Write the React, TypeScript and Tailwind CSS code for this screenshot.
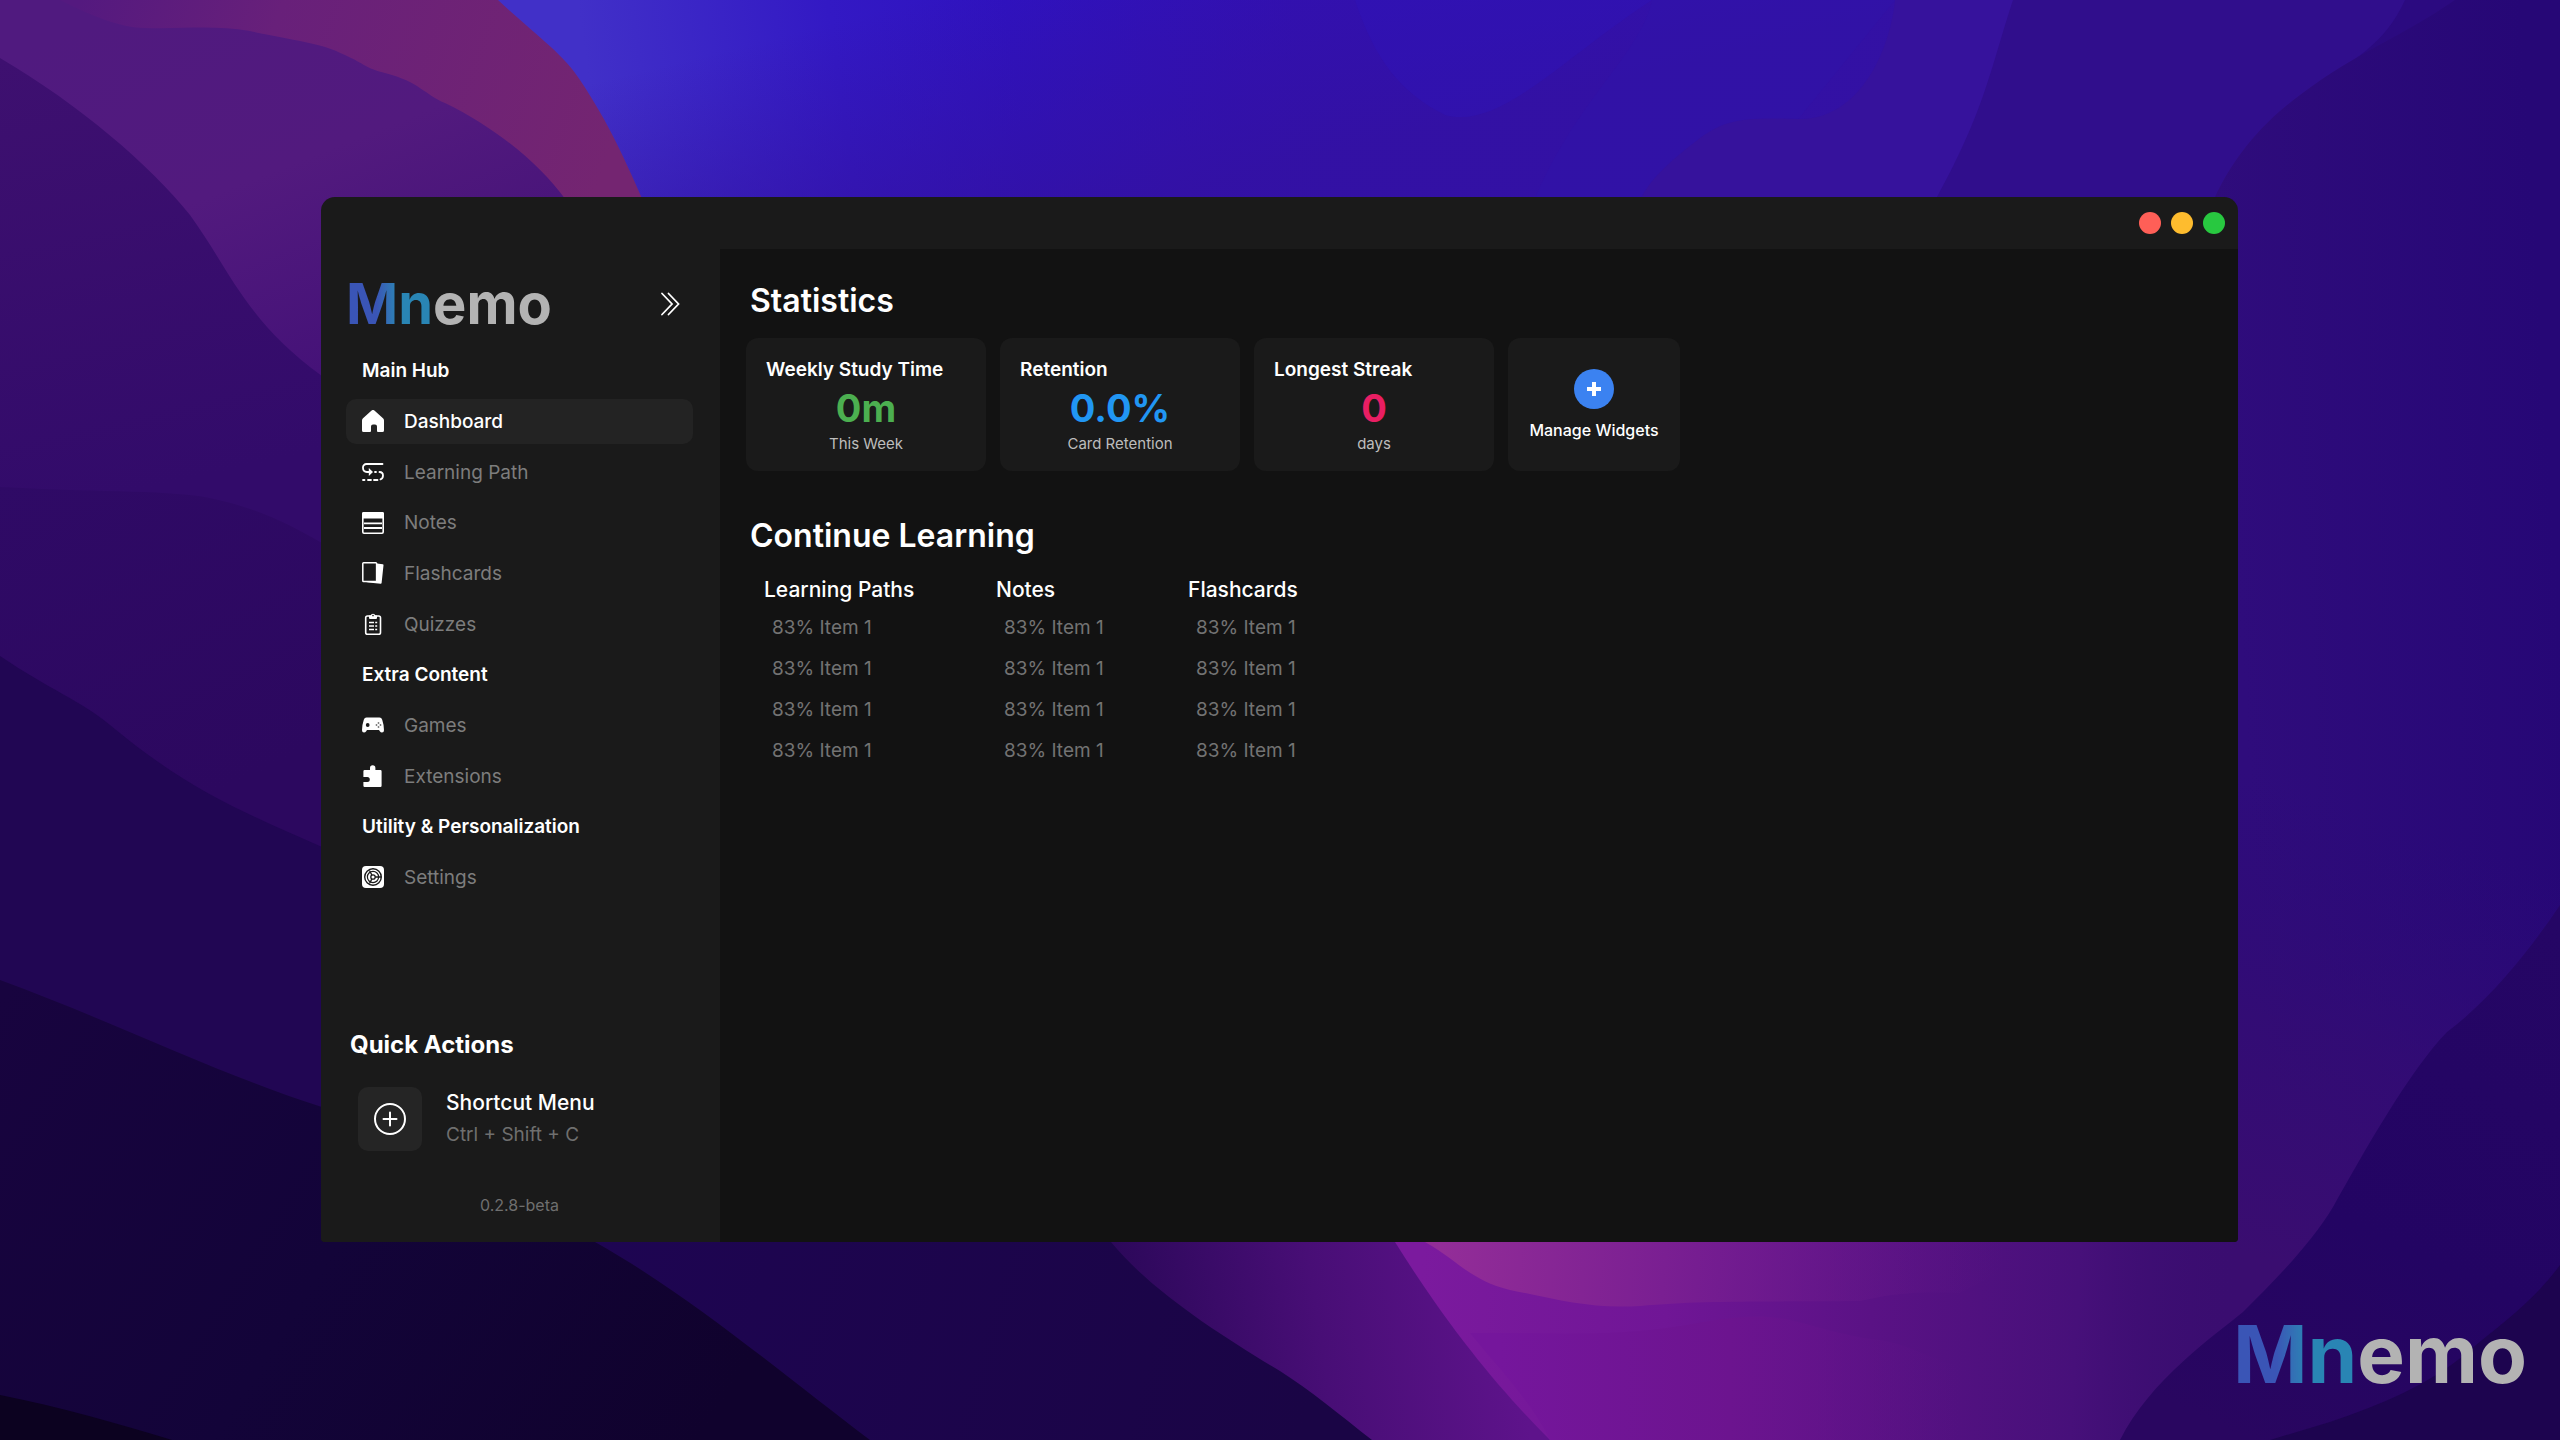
import React from "react";

function Wallpaper() {
  return (
    <svg
      className="absolute inset-0 h-full w-full"
      viewBox="0 0 2560 1440"
      preserveAspectRatio="none"
      aria-hidden="true"
    >
      <defs>
        <linearGradient id="sky" gradientUnits="userSpaceOnUse" x1="600" y1="160" x2="1300" y2="60">
          <stop offset="0" stopColor="#4130c8" />
          <stop offset="0.35" stopColor="#3319c4" />
          <stop offset="0.6" stopColor="#2f12bf" />
          <stop offset="1" stopColor="#3210b4" />
        </linearGradient>
        <linearGradient id="skyShade" gradientUnits="userSpaceOnUse" x1="760" y1="40" x2="820" y2="280">
          <stop offset="0" stopColor="#3311a0" stopOpacity="0" />
          <stop offset="1" stopColor="#3311a0" stopOpacity="0.8" />
        </linearGradient>
        <linearGradient id="rose" gradientUnits="userSpaceOnUse" x1="80" y1="0" x2="600" y2="180">
          <stop offset="0" stopColor="#54197f" />
          <stop offset="0.35" stopColor="#68207a" />
          <stop offset="1" stopColor="#742571" />
        </linearGradient>
        <linearGradient id="plum" gradientUnits="userSpaceOnUse" x1="150" y1="0" x2="300" y2="380">
          <stop offset="0" stopColor="#501a7f" />
          <stop offset="0.5" stopColor="#521a7e" />
          <stop offset="1" stopColor="#451278" />
        </linearGradient>
        <linearGradient id="violet" gradientUnits="userSpaceOnUse" x1="0" y1="60" x2="100" y2="500">
          <stop offset="0" stopColor="#3e1070" />
          <stop offset="1" stopColor="#320b6a" />
        </linearGradient>
        <linearGradient id="indigo" gradientUnits="userSpaceOnUse" x1="0" y1="480" x2="160" y2="820">
          <stop offset="0" stopColor="#2f0a66" />
          <stop offset="1" stopColor="#2c085f" />
        </linearGradient>
        <linearGradient id="night" gradientUnits="userSpaceOnUse" x1="0" y1="1000" x2="700" y2="1440">
          <stop offset="0" stopColor="#18043f" />
          <stop offset="0.5" stopColor="#130439" />
          <stop offset="1" stopColor="#10022d" />
        </linearGradient>
        <linearGradient id="deep" gradientUnits="userSpaceOnUse" x1="600" y1="1242" x2="1300" y2="1440">
          <stop offset="0" stopColor="#1e0552" />
          <stop offset="1" stopColor="#1a0545" />
        </linearGradient>
        <linearGradient id="orchidEdge" gradientUnits="userSpaceOnUse" x1="1120" y1="1300" x2="1500" y2="1240">
          <stop offset="0" stopColor="#2c085a" />
          <stop offset="0.5" stopColor="#480e76" />
          <stop offset="1" stopColor="#5e138b" />
        </linearGradient>
        <linearGradient id="orchid" gradientUnits="userSpaceOnUse" x1="1420" y1="1300" x2="2240" y2="1340">
          <stop offset="0" stopColor="#7b1a9e" />
          <stop offset="0.3" stopColor="#701696" />
          <stop offset="0.55" stopColor="#5a1285" />
          <stop offset="0.8" stopColor="#47107a" />
          <stop offset="1" stopColor="#390d70" stopOpacity="0" />
        </linearGradient>
        <linearGradient id="pink" gradientUnits="userSpaceOnUse" x1="1440" y1="1250" x2="2000" y2="1290">
          <stop offset="0" stopColor="#932d98" />
          <stop offset="0.4" stopColor="#7a1f92" />
          <stop offset="1" stopColor="#5a1484" stopOpacity="0" />
        </linearGradient>
        <linearGradient id="fold" gradientUnits="userSpaceOnUse" x1="1500" y1="1380" x2="1960" y2="1380">
          <stop offset="0" stopColor="#75169c" />
          <stop offset="0.5" stopColor="#6c148f" />
          <stop offset="1" stopColor="#5a1285" stopOpacity="0" />
        </linearGradient>
        <linearGradient id="east" gradientUnits="userSpaceOnUse" x1="2240" y1="640" x2="2560" y2="620">
          <stop offset="0" stopColor="#2f0c7c" />
          <stop offset="1" stopColor="#260776" />
        </linearGradient>
        <linearGradient id="eastGlow" gradientUnits="userSpaceOnUse" x1="2200" y1="1240" x2="2340" y2="800">
          <stop offset="0" stopColor="#3a0d70" />
          <stop offset="0.5" stopColor="#340c72" stopOpacity="0.7" />
          <stop offset="1" stopColor="#2b0a76" stopOpacity="0" />
        </linearGradient>
        <linearGradient id="eastLow" gradientUnits="userSpaceOnUse" x1="2500" y1="900" x2="2250" y2="1440">
          <stop offset="0" stopColor="#250665" />
          <stop offset="0.6" stopColor="#230463" />
          <stop offset="1" stopColor="#290660" />
        </linearGradient>
      </defs>
      <rect width="2560" height="1440" fill="url(#sky)" />
      <rect width="2560" height="260" fill="url(#skyShade)" />
      <path d="M1355 0C1375 60 1400 92 1445 115C1500 130 1560 60 1652 0Z" fill="#2f14bc" opacity="0.35" />
      <path d="M1652 0C1640 60 1560 110 1520 240H1700L1895 0Z" fill="#2f14aa" opacity="0.4" />
      <path d="M1895 0C1890 50 1860 119 1800 119C1740 117 1725 120 1700 138C1665 165 1650 180 1640 200V300H2100V0Z" fill="#36129c" />
      <path d="M2013 0C1990 70 1985 110 1937 197L1900 300H2560V0Z" fill="#300e8c" />
      <path d="M2405 0C2385 45 2350 62 2320 82L2560 200V0Z" fill="#2b0a80" />
      <path
        d="M2455 0C2400 38 2360 50 2300 95C2255 128 2230 165 2215 197L1700 700V1440H2560V0Z"
        fill="url(#east)"
      />
      <path d="M1700 700H2560V1440H1700Z" fill="url(#eastGlow)" />
      <path d="M498 0C530 30 565 55 580 80C610 125 625 160 645 205H0V0Z" fill="url(#rose)" />
      <path
        d="M0 0H60C90 15 120 28 145 28C185 29 215 25 250 31C290 40 320 42 345 55C365 64 365 68 385 73C420 82 425 95 445 103C500 130 540 165 566 200L400 420H0Z"
        fill="url(#plum)"
      />
      <path d="M0 58C80 105 150 165 190 215C230 270 245 320 322 376L500 500V1000H0Z" fill="url(#violet)" />
      <path d="M0 487C90 492 160 490 205 497C260 508 290 525 322 543L500 700V1000H0Z" fill="url(#indigo)" />
      <path d="M0 656C50 690 80 700 110 725C190 792 250 815 322 847L900 1000V1440H0Z" fill="#210653" />
      <path d="M322 1000H1400V1440H322Z" fill="url(#deep)" />
      <path d="M0 980C110 1020 220 1075 322 1107L595 1242C690 1295 790 1380 870 1440H0Z" fill="url(#night)" />
      <path d="M0 1395C60 1407 120 1424 172 1440H0Z" fill="#0c0220" />
      <path d="M1111 1242L1080 1200H1700V1440H1372C1340 1415 1310 1390 1280 1371C1220 1335 1150 1290 1111 1242Z" fill="url(#orchidEdge)" />
      <path
        d="M1395 1242L1380 1200H2560V1440H1550C1500 1390 1450 1330 1395 1242Z"
        fill="url(#orchid)"
      />
      <path
        d="M1425 1242C1460 1262 1470 1280 1510 1290C1560 1300 1590 1309 1640 1306C1700 1300 1760 1302 1860 1301C1900 1292 1920 1292 1960 1293L2060 1242Z"
        fill="url(#pink)"
      />
      <path
        d="M1500 1333C1560 1333 1620 1336 1680 1326C1730 1317 1760 1313 1790 1320C1830 1330 1850 1337 1880 1340C1910 1345 1920 1355 1960 1366V1440H1550C1530 1400 1500 1370 1470 1333Z"
        fill="url(#fold)"
      />
      <path
        d="M2560 905C2530 950 2490 1000 2447 1032C2410 1070 2365 1150 2333 1207C2310 1245 2275 1280 2243 1312C2215 1335 2150 1380 2120 1440H2560Z"
        fill="url(#eastLow)"
      />
      <path d="M2560 1265C2535 1300 2500 1325 2470 1350C2430 1385 2380 1405 2330 1422L2270 1440H2560Z" fill="#1d044f" />
    </svg>
  );
}

function Wordmark({ className }: { className: string }) {
  return (
    <span className={className}>
      <span className="bg-linear-to-r from-[#3a55b6] from-35% to-[#2985b4] to-60% bg-clip-text text-transparent">Mn</span>
      <span className="text-[#b3b3b3]">emo</span>
    </span>
  );
}

type IconProps = { children: React.ReactNode };

function Icon({ children }: IconProps) {
  return (
    <svg className="size-[22px] shrink-0" viewBox="0 0 22 22" fill="none" aria-hidden="true">
      {children}
    </svg>
  );
}

const HomeIcon = (
  <Icon>
    <path
      fill="#fff"
      d="M9.6.6a2 2 0 0 1 2.800 0l8.600 7.600q1 .9 1 2.200v10q0 1.600-1.600 1.600h-4.400q-1 0-1-1v-4.500a2 2 0 0 0-2-2h-2a2 2 0 0 0-2 2V21q0 1-1 1H1.600Q0 22 0 20.400v-10Q0 9.100 1 8.200z"
    />
  </Icon>
);

const PathIcon = (
  <Icon>
    <g stroke="#fff" strokeWidth="1.800" strokeLinecap="round">
      <path d="M20.500 3H4.500a3.500 3.500 0 0 0-3.500 3.800Q1 11 5 11h3" />
      <path d="M13 11h1M17.500 11q3.500.2 3.500 3.500 0 3-2.500 3.900" />
      <path d="M1 19h1.500M6 19h3M12 19h3.500" />
    </g>
    <path d="M6.800 7l4.200 4-4.200 4z" fill="#fff" />
  </Icon>
);

const NotesIcon = (
  <Icon>
    <rect x="0.800" y="0.800" width="20.400" height="20.400" rx="1.200" stroke="#fff" strokeWidth="1.600" />
    <path fill="#fff" d="M0 1.500Q0 0 1.500 0h19Q22 0 22 1.500V6.500H0z" />
    <path d="M2 11.300h18M2 16h18" stroke="#fff" strokeWidth="1.800" />
  </Icon>
);

const CardsIcon = (
  <Icon>
    <path d="M15 1.500l5.800.8q.8.100.7 1L19.600 21q-.1.900-1 .8L4 20.200l11-1z" fill="#fff" />
    <rect x="0.800" y="0.800" width="13.800" height="18.800" rx="0.800" fill="#1a1a1a" stroke="#fff" strokeWidth="1.500" />
  </Icon>
);

const QuizIcon = (
  <Icon>
    <rect x="3.700" y="3" width="14.800" height="18.200" rx="1.800" stroke="#fff" strokeWidth="1.600" />
    <path d="M7 2.500h1.600a2.500 2.500 0 0 1 4.800 0H15V5q0 1-1 1H8Q7 6 7 5z" fill="#fff" />
    <circle cx="11" cy="2.600" r="0.800" fill="#1a1a1a" />
    <path d="M7 9.500h5M7 13h5M7 16.500h5" stroke="#fff" strokeWidth="1.500" />
    <path d="M13.200 9.500h2M13.200 13h2M13.200 16.500h2" stroke="#fff" strokeWidth="1.300" />
  </Icon>
);

const GamesIcon = (
  <Icon>
    <path
      fill="#fff"
      d="M4.500 3.500h13q2 0 2.700 2.200Q22 11 22 16.200q0 2.300-2 2.300-1.300 0-2-1.100l-1-1.500H5l-1 1.500q-.7 1.100-2 1.100-2 0-2-2.300Q0 11 1.800 5.700 2.500 3.500 4.500 3.500z"
    />
    <circle cx="5.700" cy="11" r="1.900" fill="#1a1a1a" />
    <g fill="#777">
      <circle cx="16.500" cy="9" r="0.900" />
      <circle cx="16.500" cy="13" r="0.900" />
      <circle cx="14.500" cy="11" r="0.900" />
      <circle cx="18.500" cy="11" r="0.900" />
    </g>
  </Icon>
);

const PuzzleIcon = (
  <Icon>
    <path
      fill="#fff"
      d="M2.600 5H8V3a2.700 2.700 0 0 1 5.400 0V5H18.400q1.200 0 1.200 1.200V20.800Q19.600 22 18.400 22H2.600Q1.400 22 1.400 20.800V17H5.300a2.500 2.500 0 0 0 0-5H1.400V6.200Q1.400 5 2.600 5z"
    />
  </Icon>
);

const SettingsIcon = (
  <Icon>
    <rect width="22" height="22" rx="4" fill="#fff" />
    <circle cx="11" cy="11" r="8.300" stroke="#1a1a1a" strokeWidth="1.400" />
    <circle cx="11" cy="11" r="5.600" stroke="#1a1a1a" strokeWidth="1.200" />
    <circle cx="11" cy="11" r="2.200" stroke="#1a1a1a" strokeWidth="1.300" />
    <path d="M13.200 11H19M9.900 9.100L7.500 4.500M9.900 12.900l-2.400 4.600" stroke="#1a1a1a" strokeWidth="1.300" />
  </Icon>
);

type NavEntry = { label: string; icon?: React.ReactNode; active?: boolean };

const navEntries: NavEntry[] = [
  { label: "Main Hub" },
  { label: "Dashboard", icon: HomeIcon, active: true },
  { label: "Learning Path", icon: PathIcon },
  { label: "Notes", icon: NotesIcon },
  { label: "Flashcards", icon: CardsIcon },
  { label: "Quizzes", icon: QuizIcon },
  { label: "Extra Content" },
  { label: "Games", icon: GamesIcon },
  { label: "Extensions", icon: PuzzleIcon },
  { label: "Utility & Personalization" },
  { label: "Settings", icon: SettingsIcon },
];

function Sidebar() {
  return (
    <aside className="flex w-[399px] shrink-0 flex-col bg-[#1a1a1a] pr-[27px] pl-[25px]">
      <div className="flex h-[109px] items-center justify-between pr-[9px]">
        <Wordmark className="text-[56px] leading-none font-bold" />
        <button type="button" aria-label="Collapse sidebar" className="flex size-[26px] items-center justify-center">
          <svg className="size-[26px]" viewBox="0 0 26 26" fill="none" stroke="#fff" strokeWidth="1.800" aria-hidden="true">
            <path d="M4 2.500L14 13L4 23.500M10.500 2.500L20.500 13L10.500 23.500" strokeLinecap="round" />
          </svg>
        </button>
      </div>
      <nav aria-label="Main" className="mt-[-10px] flex h-[552px] flex-col justify-between">
        {navEntries.map((entry) =>
          entry.icon ? (
            <button
              key={entry.label}
              type="button"
              className={
                entry.active
                  ? "flex h-[45px] items-center gap-[20px] rounded-[10px] bg-[#232323] px-[16px] text-[19px] font-medium text-white"
                  : "flex h-[45px] items-center gap-[20px] rounded-[10px] px-[16px] text-[19px] text-[#7d7d7d]"
              }
            >
              {entry.icon}
              <span className="pt-[2px]">{entry.label}</span>
            </button>
          ) : (
            <h2 key={entry.label} className="flex h-[45px] items-center px-[16px] pt-[2px] text-[19px] font-semibold text-white">
              {entry.label}
            </h2>
          ),
        )}
      </nav>
      <section className="mt-auto px-1">
        <h2 className="text-[24px] leading-[32px] font-bold text-white">Quick Actions</h2>
        <button type="button" className="mt-[26px] ml-[8px] flex items-center gap-[24px] text-left">
          <span className="flex size-[64px] items-center justify-center rounded-[10px] bg-[#252525]">
            <svg className="size-[34px]" viewBox="0 0 34 34" fill="none" stroke="#fff" strokeWidth="2" aria-hidden="true">
              <circle cx="17" cy="17" r="15" />
              <path d="M17 10.500v13M10.500 17h13" strokeLinecap="round" />
            </svg>
          </span>
          <span className="flex flex-col">
            <span className="text-[21px] leading-[32px] font-medium text-white">Shortcut Menu</span>
            <span className="text-[19px] leading-[32px] text-[#6f6f6f]">Ctrl + Shift + C</span>
          </span>
        </button>
      </section>
      <p className="mt-[42px] mb-[25px] text-center text-[16px] leading-[24px] text-[#6f6f6f]">0.2.8-beta</p>
    </aside>
  );
}

type StatProps = { title: string; value: string; valueClass: string; caption: string };

function StatCard({ title, value, valueClass, caption }: StatProps) {
  return (
    <article className="flex w-[240px] flex-col rounded-[12px] bg-[#1a1a1a] px-[20px] pt-[19px] pb-[16px]">
      <h3 className="text-[19px] leading-[26px] font-semibold text-white">{title}</h3>
      <p className={valueClass}>{value}</p>
      <p className="text-center text-[15px] leading-[22px] text-[#bdbdbd]">{caption}</p>
    </article>
  );
}

const columns = ["Learning Paths", "Notes", "Flashcards"];
const items = ["83% Item 1", "83% Item 1", "83% Item 1", "83% Item 1"];

function Dashboard() {
  return (
    <main className="grow bg-[#121212] pt-[32px] pl-[26px]">
      <h1 className="pl-[4px] text-[32px] leading-[40px] font-semibold text-white">Statistics</h1>
      <div className="mt-[17px] flex gap-[14px]">
        <StatCard
          title="Weekly Study Time"
          value="0m"
          valueClass="text-center text-[38px] leading-[50px] font-bold text-[#4caf50]"
          caption="This Week"
        />
        <StatCard
          title="Retention"
          value="0.0%"
          valueClass="text-center text-[38px] leading-[50px] font-bold text-[#2196f3]"
          caption="Card Retention"
        />
        <StatCard
          title="Longest Streak"
          value="0"
          valueClass="text-center text-[38px] leading-[50px] font-bold text-[#e91e63]"
          caption="days"
        />
        <button
          type="button"
          className="flex w-[172px] flex-col items-center justify-center gap-[10px] rounded-[12px] bg-[#1a1a1a] text-[16px] leading-[22px] font-medium text-white"
        >
          <span className="flex size-[40px] items-center justify-center rounded-full bg-[#3b82f1]">
            <svg className="size-[14px]" viewBox="0 0 14 14" stroke="#fff" strokeWidth="4" aria-hidden="true">
              <path d="M7 0v14M0 7h14" />
            </svg>
          </span>
          Manage Widgets
        </button>
      </div>
      <h2 className="mt-[45px] pl-[4px] text-[32px] leading-[40px] font-semibold text-white">Continue Learning</h2>
      <div className="mt-[17px] grid grid-cols-[232px_192px_auto] justify-start pl-[18px]">
        {columns.map((column) => (
          <section key={column}>
            <h3 className="text-[21px] leading-[34px] font-medium text-white">{column}</h3>
            <ul className="pl-[8px] text-[19px] leading-[41px] text-[#737373]">
              {items.map((item, index) => (
                <li key={index}>{item}</li>
              ))}
            </ul>
          </section>
        ))}
      </div>
    </main>
  );
}

export default function App() {
  return (
    <div className="relative flex min-h-screen overflow-hidden bg-[#210653] pt-[197px] pr-[322px] pb-[198px] pl-[321px] font-['Inter','Noto_Sans',sans-serif]">
      <Wallpaper />
      <div className="relative flex grow flex-col overflow-hidden rounded-t-[14px] rounded-b-[4px] bg-[#1a1a1a]">
        <header className="flex h-[52px] shrink-0 items-center justify-end gap-[10px] pr-[13px]">
          <button type="button" aria-label="Close" className="size-[22px] rounded-full bg-[#ff5f57]" />
          <button type="button" aria-label="Minimize" className="size-[22px] rounded-full bg-[#febc2e]" />
          <button type="button" aria-label="Maximize" className="size-[22px] rounded-full bg-[#28c840]" />
        </header>
        <div className="flex grow">
          <Sidebar />
          <Dashboard />
        </div>
      </div>
      <Wordmark className="absolute right-[33px] bottom-[44px] text-[80px] leading-[84px] font-bold" />
    </div>
  );
}
